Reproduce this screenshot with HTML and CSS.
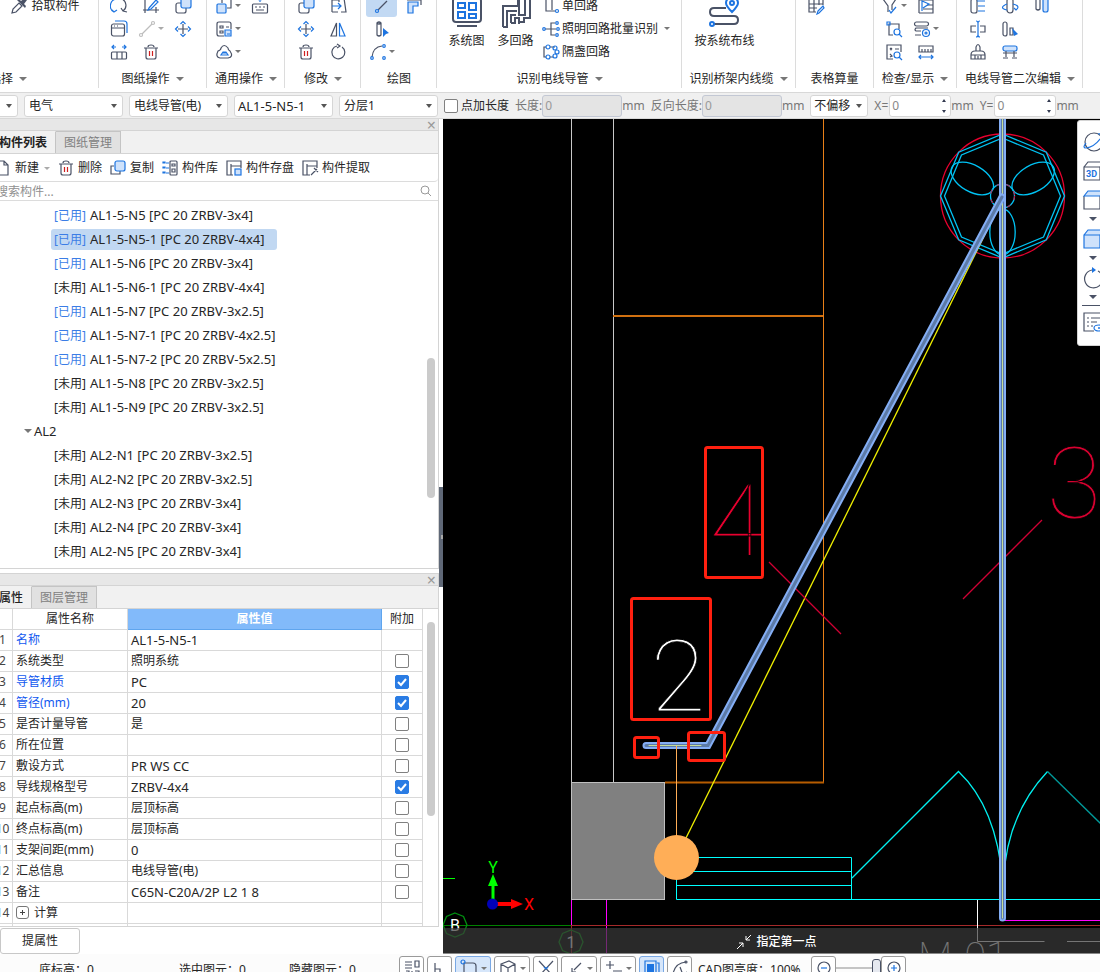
FILE: index.html
```html
<!DOCTYPE html>
<html lang="zh-CN">
<head>
<meta charset="utf-8">
<title>电线导管</title>
<link rel="stylesheet" href="styles.css">
</head>
<body>
<header class="ribbon">
  <section class="group pick">
    <div class="cells"><button class="cmd"><svg class="i" viewBox="0 0 18 18"><path d="M2 16l1-4 6-6 3 3-6 6z"/><path class="solid" d="M7 3l8 8 1-2-2-2 3-4-2-2-4 3-2-2z"/></svg>拾取构件</button></div>
    <h2>选择<i class="car"></i></h2>
  </section>
  <section class="group g-draw">
    <div class="cells">
      <button aria-label="旋转图纸"><svg class="i" viewBox="0 0 18 18"><path class="b" d="M4 15A7 7 0 0 1 6 2M2 13l2 2 3-2"/><path d="M12 2a7 7 0 0 1 1 12M11 11l2 3 4 1"/></svg></button>
      <button aria-label="设置比例"><svg class="i" viewBox="0 0 18 18"><path d="M3 1v15M1 13h16M14 10v6"/><path class="b" d="M7 11l7-8 2 2-7 7-3 1z"/></svg></button>
      <button aria-label="复制图纸"><svg class="i" viewBox="0 0 18 18"><rect x="2" y="6" width="10" height="10" rx="2"/><rect class="bf" x="7" y="1" width="10" height="10" rx="2"/></svg></button>
      <button aria-label="图层窗口"><svg class="i" viewBox="0 0 18 18"><path class="b" d="M5 1h9q3 0 3 3v9"/><rect x="1.500" y="4" width="13" height="12" rx="2"/><path d="M2 8h12M4 6h1M7 6h1"/></svg></button>
      <button aria-label="直线"><svg class="i pale" viewBox="0 0 18 18"><path d="M4 14L14 4"/><circle cx="3" cy="15" r="1.500"/><circle cx="15" cy="3" r="1.500"/></svg><i class="car light"></i></button>
      <button aria-label="移动图纸"><svg class="i" viewBox="0 0 18 18"><path d="M9 4v10M4 9h10"/><path class="b" d="M6.500 4L9 1.500 11.500 4M6.500 14L9 16.500l2.500-2.500M4 6.500L1.500 9 4 11.500M14 6.500L16.500 9 14 11.500"/></svg></button>
      <button aria-label="测量"><svg class="i" viewBox="0 0 18 18"><path class="b" d="M2 4h4M4 2L2 4l2 2M12 4h4M14 2l2 2-2 2"/><rect x="1.500" y="9" width="15" height="7" rx="1"/><path d="M7 9v7M12 9v7"/></svg></button>
      <button aria-label="删除图纸"><svg class="i" viewBox="0 0 18 18"><path d="M2 5h14M6 4q0-2 3-2t3 2M4 5v9q0 2 2 2h6q2 0 2-2V5"/><path class="r" d="M7.500 8v5M10.500 8v5"/></svg></button>
    </div>
    <h2>图纸操作<i class="car"></i></h2>
  </section>
  <section class="group g-common">
    <div class="cells two">
      <button aria-label="层叠"><svg class="i" viewBox="0 0 18 18"><rect class="bf" x="2" y="7" width="9" height="9" rx="1"/><path d="M7 6V2h9v9h-4"/></svg><i class="car"></i></button>
      <button aria-label="键盘"><svg class="i" viewBox="0 0 18 18"><path class="b" d="M9 0v5M7 3l2-2 2 2"/><rect x="1.500" y="7" width="15" height="9" rx="1"/><path d="M4 10h2M8 10h2M12 10h2M5 13h8"/></svg></button>
      <button class="c1" aria-label="表单"><svg class="i" viewBox="0 0 18 18"><path d="M9 16H4q-2 0-2-2V4q0-2 2-2h10q2 0 2 2v5M5 6h3v2H5zM11 7h3M5 11h3v2H5z"/><path class="bf" d="M10 10h6v6h-6zM12 14h3"/></svg><i class="car"></i></button>
      <button class="c1" aria-label="云线"><svg class="i" viewBox="0 0 18 18"><path d="M6 5q3-5 7 0 0 2 2 3 4 6-2 7H5q-5-1-2-7 3-1 3-3z"/><path class="b" d="M6 12h7l-2-3H8zM7 10h4"/></svg><i class="car"></i></button>
    </div>
    <h2>通用操作<i class="car"></i></h2>
  </section>
  <section class="group g-edit">
    <div class="cells two">
      <button aria-label="复制"><svg class="i" viewBox="0 0 18 18"><rect x="2" y="6" width="10" height="10" rx="2"/><rect class="bf" x="7" y="1" width="10" height="10" rx="2"/></svg></button>
      <button aria-label="偏移"><svg class="i" viewBox="0 0 18 18"><path d="M3 3h7v2M3 15V3M3 15h6M12 1h3l2 14h-5"/><path class="b" d="M3 9h9M9 6l3 3-3 3"/></svg></button>
      <button aria-label="移动"><svg class="i" viewBox="0 0 18 18"><path d="M9 4v10M4 9h10"/><path class="b" d="M6.500 4L9 1.500 11.500 4M6.500 14L9 16.500l2.500-2.500M4 6.500L1.500 9 4 11.500M14 6.500L16.500 9 14 11.500"/></svg></button>
      <button aria-label="镜像"><svg class="i" viewBox="0 0 18 18"><path d="M7.500 3v13H2z"/><path class="b" d="M10.500 3v13H16z"/></svg></button>
      <button aria-label="删除构件"><svg class="i" viewBox="0 0 18 18"><path d="M2 5h14M6 4q0-2 3-2t3 2M4 5v9q0 2 2 2h6q2 0 2-2V5"/><path class="r" d="M7.500 8v5M10.500 8v5"/></svg></button>
      <button aria-label="旋转"><svg class="i" viewBox="0 0 18 18"><path d="M13 4a6.500 6.500 0 1 1-5-1"/><path d="M8 1l3 2-3 2"/></svg></button>
    </div>
    <h2>修改<i class="car"></i></h2>
  </section>
  <section class="group g-line">
    <div class="cells two">
      <button class="on" aria-label="直线绘制"><svg class="i" viewBox="0 0 18 18"><path d="M5 13l9-9"/><circle class="b" cx="4" cy="14" r="1.500"/></svg></button>
      <button aria-label="管段"><svg class="i" viewBox="0 0 18 18"><path class="bf" d="M3 5h10v4H8v7H3z"/><path d="M2 3h14v5"/></svg></button>
      <button class="c1" aria-label="立管"><svg class="i" viewBox="0 0 18 18"><path d="M4 3v12q2 2 4 0V3q-2-2-4 0q2 2 4 0"/><path class="solidb" d="M10 8l6 5-3 1-3 3z"/></svg></button>
      <button class="c1" aria-label="圆弧"><svg class="i" viewBox="0 0 18 18"><path d="M3 14Q4 4 13 3"/><circle class="b" cx="3" cy="15" r="1.300"/><circle class="b" cx="15" cy="3" r="1.300"/><circle class="b" cx="15" cy="15" r="1.300"/></svg><i class="car"></i></button>
    </div>
    <h2>绘图</h2>
  </section>
  <section class="group g-loop">
    <div class="wide">
      <button class="big"><svg class="i xl" viewBox="0 0 32 32"><rect x="2" y="1" width="28" height="24" rx="3"/><path class="b" d="M7 6h7v5H7zM18 6h7v7h-7zM7 15h7v6H7zM18 17h7v4h-7z"/><path d="M6 29h20"/></svg>系统图</button>
      <button class="big"><svg class="i xl" viewBox="0 0 32 32"><path d="M3 30V9h15V1M3 30h4V14h10M11 26V18h5M11 26h4v-5h4v6M19 1v17h6V1M19 25h5v-4h6V1"/></svg>多回路</button>
      <div class="lines">
        <button class="cmd"><svg class="i" viewBox="0 0 18 18"><path d="M4 1v13h9M4 2h6v11"/><circle class="b" cx="15" cy="14" r="1.500"/></svg>单回路</button>
        <button class="cmd"><svg class="i" viewBox="0 0 18 18"><path d="M3 9h6M13 3H9v12h4M9 9h5"/><circle class="b" cx="2" cy="9" r="1.300"/><circle class="b" cx="15" cy="3" r="1.300"/><circle class="b" cx="16" cy="9" r="1.300"/><circle class="b" cx="15" cy="15" r="1.300"/></svg>照明回路批量识别<i class="car"></i></button>
        <button class="cmd"><svg class="i" viewBox="0 0 18 18"><path d="M4 4H2v10h2M8 4h5M8 14h3"/><circle class="b" cx="6" cy="4" r="2"/><circle class="b" cx="6" cy="14" r="2"/><circle class="b" cx="13" cy="5" r="2"/><circle class="b" cx="15" cy="9" r="2"/><circle class="b" cx="13" cy="13" r="2"/></svg>隔盏回路</button>
      </div>
    </div>
    <h2>识别电线导管<i class="car"></i></h2>
  </section>
  <section class="group g-tray">
    <div class="wide only">
      <button class="big"><svg class="i xl" viewBox="0 0 32 32"><path d="M18 11H6q-4 0-4 4t4 4h20q4 0 4 4t-4 4H6"/><circle class="b" cx="4" cy="27" r="2"/><path class="b" d="M24 15q-6-6-6-9a6 6 0 0 1 12 0q0 3-6 9z"/><circle class="b" cx="24" cy="6" r="2"/></svg>按系统布线</button>
    </div>
    <h2>识别桥架内线缆<i class="car"></i></h2>
  </section>
  <section class="group g-table">
    <div class="cells two"><button aria-label="表格算量"><svg class="i" viewBox="0 0 18 18"><path d="M2 2h14v6M2 2v13h7M2 7h14M2 11h8M7 2v13M12 2v6"/><path class="b" d="M11 14l5-5 1 2-5 5-2 1z"/></svg></button></div>
    <h2>表格算量</h2>
  </section>
  <section class="group g-check">
    <div class="cells two">
      <button aria-label="过滤"><svg class="i" viewBox="0 0 18 18"><path d="M2 2h13l-4 6v5M2 2l5 7v6"/><path class="b" d="M8 13l2 3 5-6"/></svg><i class="car"></i></button>
      <button aria-label="图例"><svg class="i" viewBox="0 0 18 18"><path d="M2 16V3h14v13H2M10 8h6M6 12h10"/><path class="b" d="M5 14V4l7 3-6 4"/></svg></button>
      <button aria-label="检查回路"><svg class="i" viewBox="0 0 18 18"><path d="M8 15H4V4h10v5"/><path class="b" d="M2 2h3v3H2zM14 14l3 3"/><circle class="b" cx="12" cy="12" r="3"/></svg></button>
      <button aria-label="显示设置"><svg class="i" viewBox="0 0 18 18"><rect x="1.500" y="2" width="14" height="4" rx="2"/><path d="M15 8H3q-2 2 0 3h5M2 15h6"/><circle class="b" cx="13" cy="13" r="3.500"/><circle class="b" cx="13" cy="13" r="1"/></svg><i class="car"></i></button>
      <button aria-label="合法性检查"><svg class="i" viewBox="0 0 18 18"><path d="M8 16H2V2h14v7M5 5l2 2M5 7l2-2M10 6h4M5 11l2 2-2 1"/><circle class="b" cx="12" cy="12" r="3"/><path class="b" d="M14 14l3 3"/></svg></button>
      <button aria-label="测距"><svg class="i" viewBox="0 0 18 18"><path d="M2 9V3h14v6zM5 9V6M8 9V6M11 9V6M14 9V6"/><path class="b" d="M2 14h14M4 12l-2 2 2 2M14 12l2 2-2 2"/></svg></button>
    </div>
    <h2>检查/显示<i class="car"></i></h2>
  </section>
  <section class="group g-second">
    <div class="cells">
      <button aria-label="批量立管"><svg class="i" viewBox="0 0 18 18"><rect x="2" y="2" width="6" height="14" rx="2"/><path class="b" d="M8 4h8M9 9h7M9 14h7"/></svg></button>
      <button aria-label="翻转"><svg class="i" viewBox="0 0 18 18"><rect x="6" y="1" width="6" height="15" rx="3"/><path class="b" d="M6 7q-9 4 0 6M12 7q8 2 3 6l-2-2"/></svg></button>
      <button aria-label="对齐"><svg class="i" viewBox="0 0 18 18"><path d="M3 1v11q2 2 4 0V1"/><rect class="bf" x="10" y="1" width="5" height="14" rx="2"/></svg></button>
      <button aria-label="打断"><svg class="i" viewBox="0 0 18 18"><path d="M7 6H2v6h5M11 6h5v6h-5"/><path class="b" d="M7 1q2 0 2 2v12q0 2-2 2M11 1q-2 0-2 2M9 15q0 2 2 2"/></svg></button>
      <button aria-label="选择立管"><svg class="i" viewBox="0 0 18 18"><rect x="2" y="2" width="4" height="14" rx="2"/><path d="M9 8h3v7H9z"/><path class="solidb" d="M11 8l6 6-4 2z"/></svg></button>
      <button class="c1" aria-label="格式刷"><svg class="i" viewBox="0 0 18 18"><path d="M7 8V4q2-5 4 0v4M2 12q0-4 4-4h6q4 0 4 4M2 12v4h14v-4zM6 12v4M9 13v3M12 12v4"/></svg></button>
      <button aria-label="支架"><svg class="i" viewBox="0 0 18 18"><rect class="bf" x="2" y="3" width="14" height="5" rx="2"/><path d="M5 8v6M13 8v6M2 10h14M2 15h5M11 15h5"/></svg></button>
    </div>
    <h2>电线导管二次编辑<i class="car"></i></h2>
  </section>
</header>

<form class="options">
  <select class="s0" aria-label="楼层"><option></option></select>
  <select aria-label="专业"><option>电气</option></select>
  <select aria-label="构件类型"><option>电线导管(电)</option></select>
  <select class="lat" aria-label="构件"><option>AL1-5-N5-1</option></select>
  <select aria-label="分层"><option>分层1</option></select>
  <label class="tick"><input type="checkbox">点加长度</label>
  <label class="len">长度:<input type="text" value="0" disabled>mm</label>
  <label class="len">反向长度:<input type="text" value="0" disabled>mm</label>
  <select class="shift" aria-label="偏移方式"><option>不偏移</option></select>
  <label class="num">X=<input type="text" inputmode="numeric" value="0">mm</label>
  <label class="num">Y=<input type="text" inputmode="numeric" value="0">mm</label>
</form>

<main>
  <aside class="side">
    <section class="panel list">
      <div class="grip"><button aria-label="关闭构件列表">×</button></div>
      <nav class="tabs"><button class="cur">构件列表</button><button>图纸管理</button></nav>
      <div class="tools">
        <button><svg class="i" viewBox="0 0 18 18"><path d="M3 2h7l4 4v10H3zM10 2v4h4"/></svg>新建<i class="car light"></i></button>
        <button><svg class="i" viewBox="0 0 18 18"><path d="M2 5h14M6 4q0-2 3-2t3 2M4 5v9q0 2 2 2h6q2 0 2-2V5"/><path class="r" d="M7.500 8v5M10.500 8v5"/></svg>删除</button>
        <button><svg class="i" viewBox="0 0 18 18"><path d="M5 7H2v8h9v-3"/><rect class="bf" x="6" y="2" width="10" height="10" rx="2"/></svg>复制</button>
        <button><svg class="i" viewBox="0 0 18 18"><rect x="9" y="2" width="7" height="14" rx="1"/><path d="M11 5h3v2h-3zM11 10h3v3h-3z"/><path class="b" d="M2 3h2v1H2zM2 8h2v1H2zM2 13h2v1H2zM5 4h3M5 9h3M5 14h3"/></svg>构件库</button>
        <button><svg class="i" viewBox="0 0 18 18"><path d="M8 16H2V2h14v7M6 5v11M6 7h10"/><rect class="bf" x="10" y="10" width="6" height="6"/></svg>构件存盘</button>
        <button><svg class="i" viewBox="0 0 18 18"><path d="M9 16H2V2h14v7M6 5v11M6 7h10M10 16l6-6M13 9l4 4"/></svg>构件提取</button>
      </div>
      <label class="search"><input type="search" placeholder="搜索构件..." aria-label="搜索构件"><svg class="mag" viewBox="0 0 12 12"><circle cx="5" cy="5" r="4"/><path d="M8 8l3 3"/></svg></label>
      <div class="tree">
        <ul>
          <li><span class="item"><em class="used">[已用]</em>AL1-5-N5 [PC 20 ZRBV-3x4]</span></li>
          <li><span class="item sel"><em class="used">[已用]</em>AL1-5-N5-1 [PC 20 ZRBV-4x4]</span></li>
          <li><span class="item"><em class="used">[已用]</em>AL1-5-N6 [PC 20 ZRBV-3x4]</span></li>
          <li><span class="item"><em>[未用]</em>AL1-5-N6-1 [PC 20 ZRBV-4x4]</span></li>
          <li><span class="item"><em class="used">[已用]</em>AL1-5-N7 [PC 20 ZRBV-3x2.5]</span></li>
          <li><span class="item"><em class="used">[已用]</em>AL1-5-N7-1 [PC 20 ZRBV-4x2.5]</span></li>
          <li><span class="item"><em class="used">[已用]</em>AL1-5-N7-2 [PC 20 ZRBV-5x2.5]</span></li>
          <li><span class="item"><em>[未用]</em>AL1-5-N8 [PC 20 ZRBV-3x2.5]</span></li>
          <li><span class="item"><em>[未用]</em>AL1-5-N9 [PC 20 ZRBV-3x2.5]</span></li>
          <li class="node"><i class="car"></i>AL2</li>
          <li><span class="item"><em>[未用]</em>AL2-N1 [PC 20 ZRBV-3x2.5]</span></li>
          <li><span class="item"><em>[未用]</em>AL2-N2 [PC 20 ZRBV-3x2.5]</span></li>
          <li><span class="item"><em>[未用]</em>AL2-N3 [PC 20 ZRBV-3x4]</span></li>
          <li><span class="item"><em>[未用]</em>AL2-N4 [PC 20 ZRBV-3x4]</span></li>
          <li><span class="item"><em>[未用]</em>AL2-N5 [PC 20 ZRBV-3x4]</span></li>
        </ul>
        <div class="rail"><div class="thumb"></div></div>
      </div>
    </section>
    <section class="panel props">
      <div class="grip"><button aria-label="关闭属性">×</button></div>
      <nav class="tabs"><button class="cur">属性</button><button>图层管理</button></nav>
      <div class="sheet">
        <table>
          <thead><tr><th class="n"></th><th class="k">属性名称</th><th class="v">属性值</th><th class="c">附加</th></tr></thead>
          <tbody>
            <tr><td>1</td><td class="hot">名称</td><td class="lat">AL1-5-N5-1</td><td></td></tr>
            <tr><td>2</td><td>系统类型</td><td>照明系统</td><td><input type="checkbox" aria-label="附加系统类型"></td></tr>
            <tr><td>3</td><td class="hot">导管材质</td><td class="lat">PC</td><td><input type="checkbox" checked aria-label="附加导管材质"></td></tr>
            <tr><td>4</td><td class="hot">管径(mm)</td><td class="lat">20</td><td><input type="checkbox" checked aria-label="附加管径"></td></tr>
            <tr><td>5</td><td>是否计量导管</td><td>是</td><td><input type="checkbox" aria-label="附加是否计量导管"></td></tr>
            <tr><td>6</td><td>所在位置</td><td></td><td><input type="checkbox" aria-label="附加所在位置"></td></tr>
            <tr><td>7</td><td>敷设方式</td><td class="lat">PR WS CC</td><td><input type="checkbox" aria-label="附加敷设方式"></td></tr>
            <tr><td>8</td><td>导线规格型号</td><td class="lat">ZRBV-4x4</td><td><input type="checkbox" checked aria-label="附加导线规格型号"></td></tr>
            <tr><td>9</td><td>起点标高(m)</td><td>层顶标高</td><td><input type="checkbox" aria-label="附加起点标高"></td></tr>
            <tr><td>10</td><td>终点标高(m)</td><td>层顶标高</td><td><input type="checkbox" aria-label="附加终点标高"></td></tr>
            <tr><td>11</td><td>支架间距(mm)</td><td class="lat">0</td><td><input type="checkbox" aria-label="附加支架间距"></td></tr>
            <tr><td>12</td><td>汇总信息</td><td>电线导管(电)</td><td><input type="checkbox" aria-label="附加汇总信息"></td></tr>
            <tr><td>13</td><td>备注</td><td class="lat">C65N-C20A/2P L2 1 8</td><td><input type="checkbox" aria-label="附加备注"></td></tr>
            <tr><td>14</td><td><button class="plus" aria-label="展开计算"></button>计算</td><td></td><td></td></tr>
            <tr><td></td><td></td><td></td><td></td></tr>
          </tbody>
        </table>
        <div class="rail"><div class="thumb"></div></div>
      </div>
    </section>
    <button class="extract">提属性</button>
  </aside>
  <div class="split"><button aria-label="收起面板"></button></div>

  <section class="view">
    <svg class="cad" role="img" aria-label="电气平面图">
      <g transform="translate(-443 -119)">
        <g stroke="#c8c8c8"><path d="M571.500 119v781"/><path d="M613.500 119v664"/></g>
        <path stroke="#e87f18" d="M823.500 119v664"/>
        <path stroke="#d07010" stroke-width="2" d="M613 316h210"/>
        <path stroke="#b65c00" stroke-width="2" d="M665 782.500h159"/>
        <rect x="571.500" y="782.500" width="93" height="117" fill="#808080" stroke="#c0c0c0"/>
        <path stroke="#00ffff" d="M677 857.500h174.500v42M677 871.500h174M677 885.500h174M676.500 880v19.500h424"/>
        <path class="slant" stroke="#00f0f0" d="M852 878l106.500-106.500q38 36 44 109M1003.500 881q3-66 44-109.500"/>
        <path class="slant" stroke="#009a9a" d="M1047.500 771.500l53 52"/>
        <path stroke="#ff00ff" d="M571.500 900v28M606.500 900v54M1005 920.500h95"/>
        <path stroke="#008000" d="M443 925.500h128"/>
        <path stroke="#a52a2a" d="M571 925.500h529M571.500 926v28"/>
        <path stroke="#fff" d="M977.500 900v41.500h67M1067 941.500h33"/>
        <g class="slant" stroke="#009010"><path d="M455 913l8.500 3.500 3.500 8.500-3.500 8.500-8.500 3.500-8.500-3.500-3.500-8.500 3.500-8.500z"/><path d="M571 930l8.500 3.500 3.500 8.500-3.500 8.500-8.500 3.500-8.500-3.500-3.500-8.500 3.500-8.500z"/></g>
        <text class="t16" x="455" y="931" fill="#fff">B</text>
        <text class="t16" x="571" y="948" fill="#fff">1</text>
        <text class="mark" x="918" y="971" fill="#fff">M-01</text>

        <circle class="slant" cx="1002.500" cy="196" r="62" stroke="#e8002f"/>
        <g class="slant" stroke="#00c3f4">
          <path d="M1002.500 134l43.800 18.200 18.200 43.800-18.200 43.800-43.800 18.200-43.800-18.200-18.200-43.800 18.200-43.800z"/>
          <path d="M1002.500 138l41 17 17 41-17 41-41 17-41-17-17-41 17-41z"/>
          <ellipse cx="972.300" cy="178.500" rx="23.300" ry="13.200" transform="rotate(30 972.300 178.500)"/>
          <ellipse cx="1033.200" cy="178.500" rx="23.300" ry="13.200" transform="rotate(-30 1033.200 178.500)"/>
          <ellipse cx="1002.500" cy="232" rx="12.700" ry="23"/>
          <circle cx="1002.500" cy="196" r="12"/>
        </g>
        <circle cx="1002.500" cy="196" r="12" stroke="#e0002f" stroke-dasharray="4 6"/>

        <path class="slant" stroke="#f0f000" d="M686 838L1003 198"/>
        <path class="slant" stroke="#d00034" d="M769 562l72 72M963 599l79-79"/>
        <g class="pipe"><path class="p1" d="M1002.500 115v803"/><path class="p2" d="M1002.500 115v803"/><path class="p3" d="M1002.500 115v803"/></g>
        <g class="pipe"><path class="p1" d="M646 745.500h62L1002 197"/><path class="p2" d="M646 745.500h62L1002 197"/><path class="p3" d="M649 745.500h52"/></g>
        <path stroke="#ffae57" d="M676.500 746v90"/>
        <circle cx="676.500" cy="857.500" r="22.500" fill="#ffae57"/>

        <text class="digit" x="737" y="555" fill="#e8002f">4</text>
        <text class="digit" x="678" y="711" fill="#fff">2</text>
        <text class="digit" x="1074" y="518" fill="#d80030">3</text>

        <g stroke="#ff2010" stroke-width="3"><rect x="705.500" y="447.500" width="57" height="130" rx="2"/><rect x="631.500" y="598.500" width="79" height="121" rx="2"/><rect x="634.500" y="737.500" width="24" height="20" rx="2"/><rect x="688.500" y="732.500" width="36" height="28" rx="2"/></g>

        <path stroke="#00ff00" d="M443 878.500h12"/>
        <path stroke="#00ff00" stroke-width="3" d="M493 900v-16"/><path fill="#00ff00" d="M488 886l5-12 5 12z"/>
        <path stroke="#ff0000" stroke-width="4" d="M497 904h14"/><path fill="#ff0000" d="M511 899l12 5-12 5z"/>
        <circle cx="492.500" cy="904" r="5.500" fill="#0000b8"/>
        <text class="t16" x="493" y="873" fill="#00ff00">Y</text>
        <text class="t16" x="529" y="910" fill="#ff0000">X</text>
      </g>
    </svg>
    <div class="prompt"><svg viewBox="0 0 16 16"><path d="M15 1l-5 5M10 2v4h4M1 15l6-6M3 9h4v4"/></svg>指定第一点</div>
    <div class="palette">
      <button aria-label="环绕"><svg class="i l" viewBox="0 0 22 22"><circle cx="12" cy="11" r="9"/><path class="b" d="M4 12q-4 5 0 5 8-1 14-9 4-6-2-5"/></svg></button>
      <button aria-label="三维视图"><svg class="i l" viewBox="0 0 22 22"><path d="M2 7h16v13H2zM2 7l4-5h16M18 7l4-5"/><text x="4" y="17">3D</text></svg></button>
      <button aria-label="俯视"><svg class="i l" viewBox="0 0 22 22"><path d="M2 7v13h16V7"/><path class="bf" d="M2 7l4-5h16l-4 5z"/></svg></button>
      <i class="car"></i>
      <button aria-label="实体"><svg class="i l" viewBox="0 0 22 22"><path class="bf" d="M2 7h16v13H2zM2 7l4-5h16l-4 5"/></svg></button>
      <i class="car"></i>
      <button aria-label="旋转视图"><svg class="i l" viewBox="0 0 22 22"><path d="M16 4a9 9 0 1 1-6-1"/><path class="solidb" d="M10 0l4 3-4 3z"/></svg></button>
      <i class="car"></i>
      <hr>
      <button aria-label="显示列表"><svg class="i l" viewBox="0 0 22 22"><path d="M12 20H2V2h18M5 7h2M9 7h10M5 11h2M9 11h6M5 15h2M9 15h2"/><ellipse class="b" cx="17" cy="17" rx="5" ry="3"/><circle class="solidb" cx="17" cy="17" r="1"/></svg></button>
    </div>
  </section>
</main>

<footer class="status">
  <span class="w1">底标高：0</span><span class="w2">选中图元：0</span><span class="w3">隐藏图元：0</span>
  <div class="keys">
    <button aria-label="二维码"><svg class="i" viewBox="0 0 18 18"><path d="M2 3h7M2 6h7M2 9h7M12 2h4v6h-4zM3 12h3v4M9 12v4M12 12h4v3"/></svg></button>
    <button aria-label="正交"><svg class="i" viewBox="0 0 18 18"><path d="M4 4v11h12M4 10h5v5"/></svg></button>
    <button class="dd on" aria-label="对象捕捉"><svg class="i" viewBox="0 0 18 18"><path d="M4 16V4h9q3 0 3 3v9"/><circle class="b" cx="3" cy="3" r="2"/></svg><i class="car"></i></button>
    <button class="dd" aria-label="三维捕捉"><svg class="i" viewBox="0 0 18 18"><path d="M2 5l8-3 6 3v9l-7 3-7-3zM2 5l7 4 7-4M9 9v8"/></svg><i class="car"></i></button>
    <button aria-label="交点"><svg class="i" viewBox="0 0 18 18"><path d="M2 2l13 14M16 2L3 16"/><path class="b" d="M7 8l2 2 2-2"/></svg></button>
    <button class="dd" aria-label="垂点"><svg class="i" viewBox="0 0 18 18"><path d="M15 4L8 11M6 9v4h4"/></svg><i class="car"></i></button>
    <button class="dd" aria-label="中点"><svg class="i" viewBox="0 0 18 18"><path d="M1 6h8M5 2v8M8 12h9"/></svg><i class="car"></i></button>
    <button class="on" aria-label="显示图纸"><svg class="i" viewBox="0 0 18 18"><path class="b" d="M2 2h11v13H2zM14 4h2v10"/><path class="solidb" d="M4 5h7v8H4z"/></svg></button>
    <button aria-label="弧线"><svg class="i" viewBox="0 0 18 18"><path d="M2 15Q4 4 15 3M9 8l3 8 4-3"/><circle cx="15" cy="3" r="1"/></svg></button>
  </div>
  <label class="bright" for="lum">CAD图亮度：100%</label>
  <button class="zoom" aria-label="降低亮度"><svg class="i" viewBox="0 0 18 18"><circle cx="9" cy="9" r="6"/><path class="b" d="M6 9h6"/></svg></button>
  <input id="lum" type="range" value="100">
  <button class="zoom" aria-label="提高亮度"><svg class="i" viewBox="0 0 18 18"><circle cx="9" cy="9" r="6"/><path class="b" d="M6 9h6M9 6v6"/></svg></button>
</footer>
</body>
</html>
```
FILE: styles.css
```css
* { box-sizing: border-box; }
body {
  margin: 0; height: 100vh; overflow: hidden; display: flex; flex-direction: column;
  font: 12px/16px "Noto Sans", "Noto Sans CJK SC", sans-serif; color: #262626; background: #fff;
}
button, input, select { font: inherit; color: inherit; }
button { border: 0; background: none; padding: 0; white-space: nowrap; }
h2 { margin: 0; font: inherit; }

.i { width: 18px; height: 18px; flex: none; fill: none; stroke: #4a5266; stroke-width: 1.2; }
.i.l { width: 22px; height: 22px; }
.i.xl { width: 32px; height: 32px; stroke-width: 2; }
.i.pale { stroke: #bdbdbd; }
.i .b { stroke: #1d74e0; }
.i .bf { stroke: #1d74e0; fill: #cfe2fb; }
.i .r { stroke: #d02020; }
.i .solid { fill: #4a5266; stroke: none; }
.i .solidb { fill: #1d74e0; stroke: none; }
.i text { font: bold 9px Roboto, sans-serif; fill: #1d74e0; stroke: none; }
.car { flex: none; display: inline-block; width: 0; height: 0; border: 4px solid transparent; border-top-color: #777; border-bottom: 0; }
.car.light { border-width: 3px; border-bottom: 0; border-top-color: #aaa; }
.lat { font-size: 13px; }

.ribbon { display: flex; flex: none; height: 93px; margin-left: -12px; overflow: hidden; border-bottom: 1px solid #d8d8d8; }
.group { flex: none; display: flex; flex-direction: column; justify-content: flex-end; gap: 5px; height: 88px; padding-left: 4px; border-right: 1px solid #dcdcdc; }
.group h2 { flex: none; height: 20px; padding-top: 1px; display: flex; align-items: center; justify-content: center; gap: 6px; margin-left: -4px; white-space: nowrap; }
.cells { flex: none; display: grid; grid-template: repeat(3, 23px) / repeat(3, 32px); height: 69px; }
.cells.two { grid-template-columns: repeat(2, 32px); }
.cells button { display: flex; align-items: center; justify-content: center; gap: 2px; }
.cells .car { border-width: 3px; border-bottom-width: 0; }
.cells .c1 { grid-column: 1; }
.cells .on { background: #c2d9f3; border-radius: 3px; margin-right: 1px; }
.cells .cmd { width: 76px; gap: 3px; margin-left: 15px; }
.pick { width: 111px; }
.pick h2 { justify-content: flex-start; margin-left: -3px; }
.g-draw { width: 108px; }
.g-common { width: 78px; padding-left: 5px; }
.g-edit { width: 76px; padding-left: 5px; }
.g-line { width: 76px; padding-left: 5px; }
.g-loop { width: 245px; padding-left: 5px; }
.g-tray { width: 114px; }
.g-table { width: 78px; }
.g-check { width: 83px; }
.g-second { width: 126px; padding-left: 5px; }
.wide { flex: none; display: flex; height: 69px; }
.wide.only { justify-content: center; margin-left: -4px; }
.big { display: flex; flex-direction: column; align-items: center; justify-content: flex-end; gap: 4px; min-width: 49px; padding-bottom: 14px; }
.g-tray .big { padding-right: 28px; }
.lines { display: grid; grid-template-rows: repeat(3, 23px); margin-left: 2px; }
.lines .cmd { display: flex; align-items: center; gap: 2px; }
.lines .car { margin-left: 4px; border-width: 3px; border-bottom-width: 0; }

.options { flex: none; height: 26px; display: flex; align-items: center; gap: 6px; margin-left: -12px; background: #f0f0f0; border-bottom: 1px solid #d8d8d8; color: #777; white-space: nowrap; }
select { appearance: none; width: 99px; height: 22px; padding: 0 4px; border: 1px solid #d6d6d6; border-radius: 3px; color: #262626;
  background: #fff url("data:image/svg+xml,%3Csvg xmlns='http://www.w3.org/2000/svg' width='6' height='4'%3E%3Cpath d='M0 0h6L3 4z' fill='%23555'/%3E%3C/svg%3E") no-repeat right 5px center; }
.s0 { width: 30px; }
.shift { width: 58px; padding: 0 3px; }
.options .lat { padding: 0 3px; }
.options label { display: flex; align-items: center; }
.tick { color: #262626; gap: 3px; }
input[type=checkbox] { appearance: none; flex: none; width: 14px; height: 14px; margin: 0; border: 1px solid #808080; border-radius: 2px; background: #fff; }
input[type=checkbox]:checked { border-color: #2a7ce4; background: #2a7ce4 url("data:image/svg+xml,%3Csvg xmlns='http://www.w3.org/2000/svg' width='12' height='12'%3E%3Cpath d='M2 6l3 3 5-6' fill='none' stroke='white' stroke-width='2'/%3E%3C/svg%3E") center; }
.len input { width: 80px; height: 22px; padding: 0 2px; border: 1px solid #c3c8d4; border-radius: 3px; background: #e4e4e4; color: #999; }
.num input { width: 62px; height: 22px; margin-left: 1px; padding: 0 2px; border: 1px solid #d6d6d6; border-radius: 3px; color: #888;
  background: #fff url("data:image/svg+xml,%3Csvg xmlns='http://www.w3.org/2000/svg' width='6' height='14'%3E%3Cpath d='M1 3h4L3 0zM1 11h4l-2 3z' fill='%23333a50'/%3E%3C/svg%3E") no-repeat right 3px center; }

main { flex: 1; min-height: 0; display: flex; }
.side { flex: none; width: 447px; margin-left: -8px; display: flex; flex-direction: column; }
.panel { border-right: 1px solid #d4d4d4; }
.list { flex: 1; min-height: 0; display: flex; flex-direction: column; border-bottom: 1px solid #d4d4d4; }
.props { flex: none; margin-top: 4px; border-top: 1px solid #d4d4d4; }
.grip { flex: none; height: 12px; background: #e7e7e7; border-bottom: 1px solid #d4d4d4; text-align: right; }
.grip button { font-size: 16px; line-height: 12px; color: #999; padding: 0 2px; display: block; margin-left: auto; }
.tabs { flex: none; height: 23px; display: flex; background: #f1f1f1; border-bottom: 1px solid #d4d4d4; }
.tabs button { padding: 0 8px; border-right: 1px solid #c4c4c4; color: #808080; background: #e1e1e1; border-top: 1px solid #c4c4c4; }
.tabs .cur { color: #222; font-weight: bold; background: #f1f1f1; padding-left: 7px; border-top-color: transparent; }
.props .cur { font-weight: 500; }
.tools { flex: none; display: flex; align-items: center; gap: 7px; height: 28px; padding: 1px 0 0 2px; border-bottom: 1px solid #dcdcdc; border-radius: 0 0 4px 0; }
.tools button { display: flex; align-items: center; gap: 3px; }
.tools .car { margin-left: 2px; }
.search { flex: none; display: flex; align-items: center; height: 19px; border-bottom: 1px solid #dcdcdc; padding-right: 6px; }
.search input { flex: 1; border: 0; padding: 0 0 0 4px; outline: 0; height: 17px; }
.search ::placeholder { color: #909090; }
.mag { width: 12px; height: 12px; fill: none; stroke: #999; }
.tree { flex: 1; min-height: 0; overflow: hidden; display: flex; padding-top: 2px; }
.tree ul { flex: 1; margin: 0; padding: 0; list-style: none; font-size: 13px; }
.tree li { height: 24px; display: flex; align-items: center; padding-left: 59px; white-space: nowrap; }
.tree .node { padding-left: 32px; gap: 2px; }
.item { display: flex; gap: 4px; padding: 0 12px 0 3px; line-height: 21px; border-radius: 3px; }
.item em { font-style: normal; font-size: 12px; }
.item .used { color: #3b7de6; }
.sel { background: #c1d8f2; }
.rail { flex: none; width: 11px; }
.thumb { width: 8px; border-radius: 4px; background: #cbcbcb; }
.tree .thumb { height: 140px; margin-top: 155px; }
.sheet { display: flex; height: 318px; overflow: hidden; border-bottom: 1px solid #d4d4d4; }
.sheet .rail { width: 15px; padding-left: 4px; }
.sheet .thumb { height: 194px; margin-top: 13px; }
table { flex: 1; border-collapse: collapse; table-layout: fixed; align-self: flex-start; }
th, td { height: 21px; padding: 0 3px; font-weight: normal; text-align: left; border: 1px solid #d9d9d9; border-top: 0; line-height: 18px; white-space: nowrap; }
th { height: 20px; text-align: center; }
td:first-child { text-align: center; padding: 0; color: #444; }
td:last-child { text-align: center; }
td input { display: block; margin: 0 auto !important; }
.n { width: 20px; } .k { width: 115px; } .c { width: 41px; padding: 0; }
.v { background: #82bafa; border-color: #5fa5ee; color: #fff; font-weight: bold; }
.hot { color: #1259f0; }
.plus { position: relative; width: 13px; height: 13px; border: 1px solid #777; border-radius: 3px; margin-right: 5px; vertical-align: -1px; }
.plus::before, .plus::after { content: ""; position: absolute; left: 3px; top: 5px; width: 5px; height: 1px; background: #444; }
.plus::after { transform: rotate(90deg); }
.extract { flex: none; width: 80px; height: 26px; margin: 1px 0 0 8px; border: 1px solid #c8c8c8; border-radius: 3px; }
.split { flex: none; width: 4px; display: flex; flex-direction: column; padding-top: 368px; }
.split button { height: 100px; background: #5f6877 linear-gradient(#aaa, #aaa) no-repeat right 48px / 2px 4px; }

.view { flex: 1; min-width: 0; position: relative; overflow: hidden; background: #000; }
.cad { display: block; width: 100%; height: 100%; fill: none; }
.cad text { text-anchor: middle; }
.slant { stroke-width: 1.3; }
.t16 { font: 16px Roboto, sans-serif; }
.cad .mark { font: 100 40px Roboto, sans-serif; text-anchor: start; }
.digit { font: 100 100px Roboto, sans-serif; stroke: #000; stroke-width: 0.8; }
.pipe { stroke-linecap: round; }
.p1 { stroke: #84aef5; stroke-width: 7; }
.p2 { stroke: #5c7aa6; stroke-width: 3; }
.p3 { stroke: #c3dc9a; }
.prompt { position: absolute; left: 0; right: 0; bottom: 0; height: 26px; display: flex; align-items: center; justify-content: center; gap: 4px; padding: 2px 0 0 10px; background: rgba(58, 58, 58, .7); color: #fff; font-weight: 500; border-bottom: 1px solid #888; }
.prompt svg { width: 16px; height: 16px; fill: none; stroke: #fff; }
.palette { position: absolute; top: 1px; right: -9px; width: 32px; height: 226px; padding: 10px 0 0 4px; background: #fff; border: 1px solid #d4d4d4; border-radius: 3px; display: flex; flex-direction: column; }
.palette button { height: 22px; margin-bottom: 7px; }
.palette button:has(+ .car) { margin-bottom: 6px; }
.palette .car { border-top-color: #4a5266; margin: 0 0 7px 7px; }
.palette hr { width: 100%; margin: -1px 0 5px; border: 0; border-top: 1px solid #4a5266; }
.palette svg { display: block; }

.status { flex: none; height: 18px; overflow: hidden; display: flex; align-items: flex-start; padding-top: 2px; background: #fcfcfc; line-height: 27px; white-space: nowrap; }
.status .w1 { width: 140px; margin-left: 39px; }
.status .w2 { width: 110px; }
.status .w3 { width: 110px; }
.keys { display: flex; gap: 3px; }
.keys button, .zoom { flex: none; display: flex; align-items: center; justify-content: center; width: 25px; height: 24px; border: 1px solid #9a9a9a; border-radius: 3px; background: #fff; }
.keys .dd { width: 36px; gap: 3px; }
.keys .car { border-width: 3px; border-bottom-width: 0; }
.keys .on { background: #d6e6fa; border-color: #79a8e4; }
.bright { width: 112px; padding-left: 6px; margin-right: 7px; }
#lum { appearance: none; width: 45px; height: 24px; margin: 0; background: linear-gradient(#c4c4c4, #c4c4c4) no-repeat center / 100% 2px; }
#lum::-webkit-slider-thumb { appearance: none; width: 9px; height: 18px; border: 1px solid #4a5266; border-radius: 3px; background: #e6e9f0; }
```
